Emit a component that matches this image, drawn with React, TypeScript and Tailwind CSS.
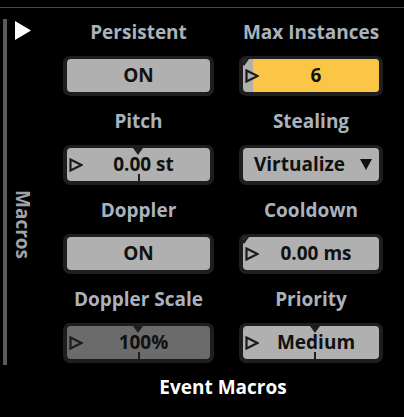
import React from "react";

const font = { fontFamily: '"Open Sans", "Noto Sans", sans-serif' };

function PlayIcon() {
  return (
    <svg width="14" height="14" viewBox="0 0 14 14" className="block">
      <polygon points="1.5,1.5 12.5,7 1.5,12.5" fill="none" stroke="#1c1c1c" strokeWidth="2.2" />
    </svg>
  );
}

function Notch({ left }: { left: number }) {
  return (
    <div
      className="absolute top-0 w-0 h-0 border-l-[5.5px] border-r-[5.5px] border-t-[7px] border-l-transparent border-r-transparent border-t-[#1e1e1e]"
      style={{ left: left - 5.5 }}
    />
  );
}

function Tick({ left }: { left: number }) {
  return <div className="absolute bottom-0 w-[2px] h-[7px] bg-[#1e1e1e]" style={{ left: left - 1 }} />;
}

type Ctl =
  | { kind: "toggle"; value: string }
  | { kind: "select"; value: string }
  | {
      kind: "slider";
      value: string;
      notch: number;
      tick?: boolean;
      fill?: number;
      dark?: boolean;
    };

function Control({ c }: { c: Ctl }) {
  const bg = c.kind === "slider" && c.dark ? "bg-[#6b6b6b]" : "bg-[#b0b0b0]";
  return (
    <div className="w-full h-[40px] rounded-[7px] bg-[#1e1e1e] px-[4px] pt-[3px] pb-[4px]">
      <div className={`relative h-full rounded-[4px] overflow-hidden ${bg} flex items-center justify-center`}>
        {c.kind === "slider" && c.fill !== undefined && (
          <div className="absolute top-0 bottom-0 right-0 bg-[#fbc546]" style={{ left: c.fill }} />
        )}
        {c.kind === "slider" && <Notch left={c.notch} />}
        {c.kind === "slider" && c.tick && <Tick left={c.notch} />}
        {c.kind === "slider" && (
          <div className="absolute left-[2px] top-0 bottom-0 flex items-center">
            <PlayIcon />
          </div>
        )}
        {c.kind === "select" ? (
          <span className="relative flex items-center gap-[15px] text-[19px] font-bold text-[#111] leading-none pl-[4px]">
            <span>{c.value}</span>
            <svg width="12" height="11" viewBox="0 0 12 11" className="block">
              <polygon points="0,0 12,0 6,11" fill="#111111" />
            </svg>
          </span>
        ) : (
          <span
            className={`relative text-[19px] font-bold text-[#111] leading-none ${
              c.kind === "slider" ? "pl-[10px]" : ""
            }`}
          >
            {c.value}
          </span>
        )}
      </div>
    </div>
  );
}

function Cell({ label, c }: { label: string; c: Ctl }) {
  return (
    <div className="flex flex-col items-center">
      <div className="h-[24px] leading-[24px] text-[19px] font-bold text-[#a9b3bd] whitespace-nowrap">{label}</div>
      <div className="mt-[12px] w-full">
        <Control c={c} />
      </div>
    </div>
  );
}

export default function App() {
  const cells: { label: string; c: Ctl }[] = [
    { label: "Persistent", c: { kind: "toggle", value: "ON" } },
    { label: "Max Instances", c: { kind: "slider", value: "6", notch: 1, fill: 10 } },
    { label: "Pitch", c: { kind: "slider", value: "0.00 st", notch: 71.5, tick: true } },
    { label: "Stealing", c: { kind: "select", value: "Virtualize" } },
    { label: "Doppler", c: { kind: "toggle", value: "ON" } },
    { label: "Cooldown", c: { kind: "slider", value: "0.00 ms", notch: 1 } },
    { label: "Doppler Scale", c: { kind: "slider", value: "100%", notch: 71.5, tick: true, dark: true } },
    { label: "Priority", c: { kind: "slider", value: "Medium", notch: 72, tick: true } },
  ];
  return (
    <div className="w-[404px] h-[417px] bg-black overflow-hidden" style={font}>
      <div className="h-[7px]" />
      <div className="h-px bg-[#4a4a4a]" />
      <div className="flex">
        <div className="w-[63px] flex pl-[3px]">
          <div className="w-[4px] h-[346px] mt-[11px] bg-[#5a5a5a]" />
          <div className="ml-[8px] flex flex-col">
            <svg width="16" height="19" viewBox="0 0 16 19" className="mt-[13px] block">
              <polygon points="0,0 16,9.5 0,19" fill="#ffffff" />
            </svg>
            <div className="mt-[150px] [writing-mode:vertical-rl] text-[19px] font-bold text-[#a0a4a8] leading-[16px]">
              Macros
            </div>
          </div>
        </div>
        <div className="grid grid-cols-[151px_144px] gap-x-[25px] gap-y-[11px] pt-[12px]">
          {cells.map((x) => (
            <Cell key={x.label} label={x.label} c={x.c} />
          ))}
        </div>
      </div>
      <div className="ml-[63px] w-[320px] mt-[9px] text-center text-[19px] leading-[26px] font-bold text-white">
        Event Macros
      </div>
    </div>
  );
}
